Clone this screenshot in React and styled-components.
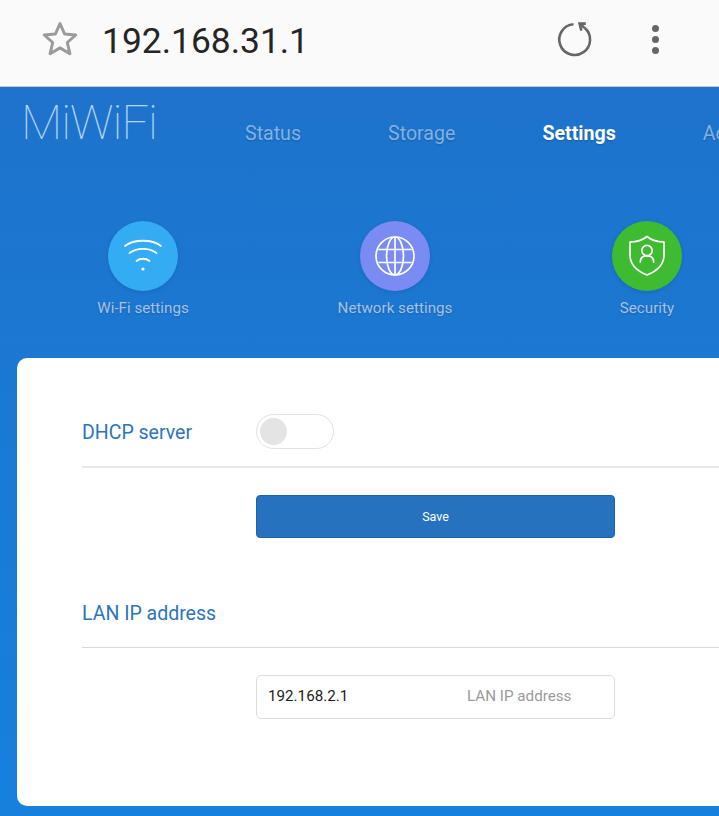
import React from "react";
import styled, { createGlobalStyle } from "styled-components";

const Global = createGlobalStyle`
  html, body { margin: 0; padding: 0; }
  body { width: 719px; height: 816px; overflow: hidden; font-family: Roboto, "Liberation Sans", sans-serif; }
`;
const Page = styled.div`width: 719px; height: 816px; overflow: hidden; display: flex; flex-direction: column;`;
const BrowserBar = styled.header`
  height: 87px; flex: none; box-sizing: border-box; background: #fafafa; display: flex; align-items: center;
  padding: 0 0 8px 42px; border-bottom: 1px solid #c9c9c9;
`;
const StarSlot = styled.svg`width: 36px; height: 36px; flex: none; margin-right: 25px; display: block;`;
const Url = styled.div`font-size: 35.4px; color: #252525; line-height: 40px; flex: 1; padding-top: 4px; margin-left: -1px;`;
const Reload = styled.svg`width: 40px; height: 40px; flex: none; margin-right: 58px; display: block;`;
const Dots = styled.div`display: flex; flex-direction: column; gap: 4px; margin-right: 60px; flex: none;`;
const Dot = styled.span`display: block; width: 7px; height: 7px; border-radius: 50%; background: #666;`;
const Blue = styled.main`
  flex: 1; min-height: 0; background: linear-gradient(#1e73cb, #1780dd); display: flex; flex-direction: column;
  padding-bottom: 10px;
`;
const TopNav = styled.nav`display: flex; height: 134px; flex: none; white-space: nowrap;`;
const LogoText = styled.div`
  width: 245px; flex: none; box-sizing: border-box; padding: 11px 0 0 21px; font-size: 48px; font-weight: 100; line-height: 50px;
  letter-spacing: -1px; color: #b4d4f3; overflow: hidden;
`;
const NavItems = styled.div`display: flex; gap: 87px; padding-top: 34px;`;
const NavItem = styled.span`
  font-size: 19.6px; line-height: 26px; font-weight: ${p => (p.$on ? 700 : 400)};
  color: ${p => (p.$on ? "#ffffff" : "#80b2e6")}; text-shadow: 0 1px 2px rgba(0,0,0,.2);
`;
const Tiles = styled.div`display: grid; grid-template-columns: repeat(3, 252px); padding-left: 17px; height: 137px; flex: none;`;
const Tile = styled.div`display: flex; flex-direction: column; align-items: center;`;
const Circle = styled.div`
  width: 70px; height: 70px; border-radius: 50%; background: ${p => p.$c}; display: flex; align-items: center; justify-content: center;
  box-shadow: 0 1px 4px rgba(0,0,0,.12);
`;
const TileLabel = styled.div`
  margin-top: 8px; font-size: 15.2px; line-height: 18px; color: #a4c2e8; text-shadow: 0 1px 2px rgba(0,0,0,.2); white-space: nowrap;
`;
const Card = styled.section`
  flex: 1; margin-left: 17px; width: 760px; box-sizing: border-box; background: #fff; border-radius: 10px 0 0 10px; padding: 56px 0 0 65px;
`;
const Row = styled.div`
  height: ${p => p.$h}px; box-sizing: border-box; width: 100%; display: flex; align-items: flex-start;
  border-bottom: ${p => p.$b}; color: #2b74bf;
`;
const RowLabel = styled.div`width: 174px; flex: none; font-size: 19.5px; line-height: 38px; color: #2b74bf;`;
const Toggle = styled.div`
  width: 78px; height: 35px; box-sizing: border-box; border: 1px solid #e2e2e2; border-radius: 18px; padding: 3px; background: #fff;
`;
const Knob = styled.div`width: 27px; height: 27px; border-radius: 50%; background: #e4e4e4;`;
const Save = styled.button`
  display: block; width: 359px; height: 43px; margin: 27px 0 0 174px; box-sizing: border-box; background: #2672be; border: 1px solid #1f62ab;
  border-radius: 4px; color: #fff; font: 400 12.5px Roboto, sans-serif; padding: 0; 
`;
const SecondRow = styled.div`margin-top: 57px;`;
const Field = styled.label`
  display: grid; grid-template-columns: 199px auto; align-items: center; width: 359px; height: 44px; margin: 27px 0 0 174px; box-sizing: border-box;
  border: 1px solid #dcdcdc; border-radius: 5px; padding: 0 0 2px 11px;
`;
const FieldValue = styled.input`
  border: 0; outline: 0; padding: 0; width: 190px; font: 400 15.2px Roboto, sans-serif; color: #222; background: transparent;
`;
const FieldHint = styled.span`font-size: 15.2px; color: #9a9a9a;`;

export default function App() {
  return (
    <Page>
      <Global />
      <BrowserBar>
        <StarSlot viewBox="0 0 36 36" fill="none" stroke="#9b9b9b" strokeWidth="3" strokeLinejoin="round">
          <path d="M18 2.5 L22.6 13 L33.7 14 L25.3 21.5 L27.9 32.7 L18 26.9 L8.1 32.7 L10.7 21.5 L2.3 14 L13.4 13 Z" />
        </StarSlot>
        <Url>192.168.31.1</Url>
        <Reload viewBox="0 0 40 40" fill="none" stroke="#666" strokeWidth="2.6">
          <path d="M19.5 5.2 A15.4 15.4 0 1 0 30.5 8.7" />
          <path d="M31.8 4.6 H25.6 L27.4 11.6" strokeLinejoin="miter" />
          <path d="M25.8 4.8 L30.5 8.7" />
        </Reload>
        <Dots><Dot /><Dot /><Dot /></Dots>
      </BrowserBar>
      <Blue>
        <TopNav>
          <LogoText>MiWiFi</LogoText>
          <NavItems>
            <NavItem>Status</NavItem>
            <NavItem>Storage</NavItem>
            <NavItem $on>Settings</NavItem>
            <NavItem>Advanced</NavItem>
          </NavItems>
        </TopNav>
        <Tiles>
          <Tile>
            <Circle $c="#33acf4">
              <svg width="70" height="70" viewBox="0 0 70 70" fill="none" stroke="#fff" strokeWidth="1.8" strokeLinecap="round">
                <path d="M17 25 C26 18 44 18 53 25" />
                <path d="M21.5 32 C29 26.5 41 26.5 48.5 32" />
                <path d="M28.5 40 C32 37 38 37 41.5 40" />
                <circle cx="35" cy="48" r="1.6" fill="#fff" stroke="none" />
              </svg>
            </Circle>
            <TileLabel>Wi-Fi settings</TileLabel>
          </Tile>
          <Tile>
            <Circle $c="#7a8cf3">
              <svg width="70" height="70" viewBox="0 0 70 70" fill="none" stroke="#fff" strokeWidth="1.7">
                <circle cx="35" cy="35" r="19" />
                <ellipse cx="35" cy="35" rx="8.5" ry="19" />
                <path d="M35 16 V54 M18.5 28.5 H51.5 M18.5 41.5 H51.5" />
              </svg>
            </Circle>
            <TileLabel>Network settings</TileLabel>
          </Tile>
          <Tile>
            <Circle $c="#3fbb32">
              <svg width="70" height="70" viewBox="0 0 70 70" fill="none" stroke="#fff" strokeWidth="1.7" strokeLinejoin="round" strokeLinecap="round">
                <path d="M35 15.5 C40 19.5 46 21 52 21 V34 C52 44 45 50 35 54 C25 50 18 44 18 34 V21 C24 21 30 19.5 35 15.5 Z" />
                <circle cx="35" cy="29.5" r="5.2" />
                <path d="M28.3 41 C28.3 36.8 31 34.8 35 34.8 C39 34.8 41.7 36.8 41.7 41" />
              </svg>
            </Circle>
            <TileLabel>Security</TileLabel>
          </Tile>
        </Tiles>
        <Card>
          <Row $h={54} $b="2px solid #e8e8e8">
            <RowLabel>DHCP server</RowLabel>
            <Toggle><Knob /></Toggle>
          </Row>
          <Save>Save</Save>
          <SecondRow>
            <Row $h={53} $b="1px solid #d9d9d9">
              <RowLabel>LAN IP address</RowLabel>
            </Row>
          </SecondRow>
          <Field>
            <FieldValue defaultValue="192.168.2.1" />
            <FieldHint>LAN IP address</FieldHint>
          </Field>
        </Card>
      </Blue>
    </Page>
  );
}
